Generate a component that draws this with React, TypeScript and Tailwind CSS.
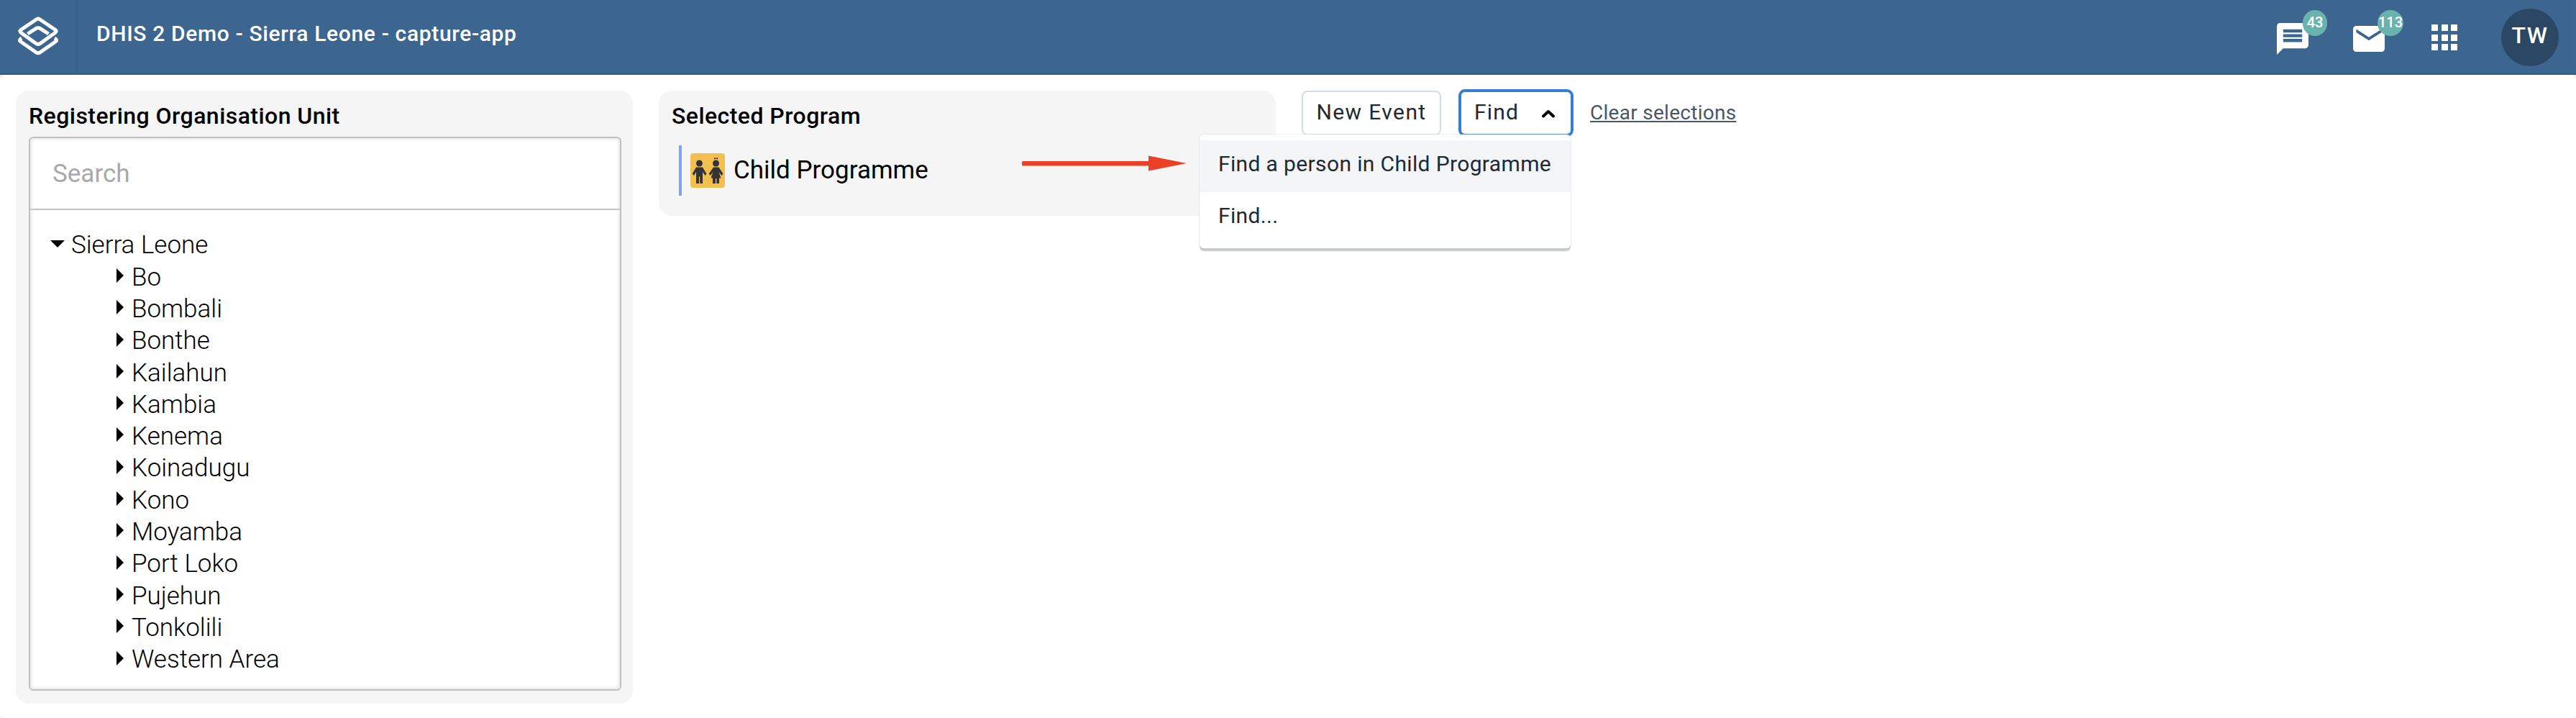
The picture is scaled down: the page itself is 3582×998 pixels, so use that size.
import React from "react";

const districts = [
  "Bo", "Bombali", "Bonthe", "Kailahun", "Kambia", "Kenema", "Koinadugu",
  "Kono", "Moyamba", "Port Loko", "Pujehun", "Tonkolili", "Western Area",
];

function Logo() {
  return (
    <svg width="58" height="56" viewBox="0 0 58 56" fill="none" stroke="#fff" strokeWidth="5" strokeLinejoin="round" className="block">
      <path d="M29 4 Q30 4 31.5 5 L53 19.5 Q55.500 21.300 53 23.200 L31.5 38.700 Q29 40.300 26.5 38.700 L5 23.200 Q2.500 21.300 5 19.5 L26.5 5 Q28 4 29 4 Z" />
      <path d="M14.5 25 L26.5 17.3 Q29 16 31.5 17.3 L43.5 25" />
      <path d="M6 31 Q1.5 33.5 5 36 L26.5 51 Q29 52.5 31.5 51 L53 36 Q56.5 33.5 52 31" />
    </svg>
  );
}

function Header() {
  return (
    <header className="flex h-[104px] items-center bg-[#3c6690] text-white shadow-[inset_0_-2px_1px_#345a80]">
      <div className="flex h-full w-[108px] shrink-0 items-center border-r-2 border-[#36608a] pl-6 pb-1">
        <Logo />
      </div>
      <div className="pb-2.5 pl-[26px] text-[30px] leading-10 font-medium tracking-[0.65px]">DHIS 2 Demo - Sierra Leone - capture-app</div>
      <div className="ml-auto flex h-full items-start pr-6">
        <div className="relative mt-8 mr-[62px] h-11 w-11">
          <svg viewBox="2 2 20 20" className="block h-11 w-11" fill="#fff">
            <path d="M20 2H4c-1.1 0-1.99.9-1.99 2L2 22l4-4h14c1.1 0 2-.9 2-2V4c0-1.1-.9-2-2-2zm-2 12H6v-2h12v2zm0-3H6V9h12v2zm0-3H6V6h12v2z" />
          </svg>
          <span className="absolute -top-[18px] left-9 flex h-9 w-[34px] items-center justify-center rounded-[18px] bg-[#69b3ac] pb-0.5 text-[20px] font-medium">43</span>
        </div>
        <div className="relative mt-9 mr-[65px] h-9 w-11">
          <svg viewBox="2 4 20 16" preserveAspectRatio="none" className="block h-9 w-11" fill="#fff">
            <path d="M20 4H4c-1.1 0-1.99.9-1.99 2L2 18c0 1.1.9 2 2 2h16c1.1 0 2-.9 2-2V6c0-1.1-.9-2-2-2zm0 4l-8 5-8-5V6l8 5 8-5v2z" />
          </svg>
          <span className="absolute -top-[22px] left-[34px] flex h-9 w-9 items-center justify-center rounded-full bg-[#69b3ac] pb-0.5 text-[20px] font-medium">113</span>
        </div>
        <div className="mt-[34px] mr-[61px] grid grid-cols-3 gap-[4.5px]">
          {Array.from({ length: 9 }, (_, i) => <span key={i} className="h-[9px] w-[9px] bg-white" />)}
        </div>
        <div className="mt-3 flex h-20 w-20 items-center justify-center rounded-full bg-[#2a4863] pb-1.5 text-[32px] font-medium tracking-[1.5px]">TW</div>
      </div>
    </header>
  );
}

function OrgUnitPanel() {
  return (
    <section className="h-[852px] w-[858px] shrink-0 rounded-[18px] bg-[#f5f5f5] px-[18px] pt-4 pr-4">
      <h2 className="h-12 text-[32px] leading-[38px] font-medium tracking-[0.45px]">Registering Organisation Unit</h2>
      <div className="h-[770px] rounded-md border-2 border-[#c0c0c0] bg-white shadow-[inset_0_0_6px_#d8d8d8]">
        <div className="flex h-[100px] items-center border-b-2 border-[#c4c4c4] pt-[3px] pl-[31px] text-[35px] text-[#a9a9a9]">Search</div>
        <ul className="pt-[27.5px] pl-7 text-[35px] font-light">
          <li className="flex h-[44.3px] items-center">
            <svg width="20" height="10" className="mb-1.5 mr-[9px]"><path d="M0 0H20L10 10Z" /></svg>
            Sierra Leone
          </li>
          {districts.map((name) => (
            <li key={name} className="flex h-[44.3px] items-center pl-[92px]">
              <svg width="10" height="20" className="mb-1.5 mr-[11px]"><path d="M0 0V20L10 10Z" /></svg>
              {name}
            </li>
          ))}
        </ul>
      </div>
    </section>
  );
}

function ChildrenIcon() {
  return (
    <svg width="48" height="48" viewBox="0 0 48 48" fill="#333" className="block">
      <rect width="48" height="48" rx="4" fill="#f3c04f" />
      <circle cx="12.5" cy="14" r="4.5" />
      <path d="M8 19.5H17L22.5 28.5 20.5 31 17 26V42H13.2V32.5H12V42H8V26L5 31 2.7 28.5Z" />
      <circle cx="35.5" cy="14" r="4.5" />
      <path d="M33 6 35.5 7 38 6V8.5L35.5 7.5 33 8.5Z" />
      <path d="M32 19.5H39.5L45.5 28.5 43.5 31 39.5 26 42.5 34.5H40V42H36.3V35H35V42H31V34.5H28.5L31.5 26 28 31 25.7 28.5Z" />
    </svg>
  );
}

function ProgramPanel() {
  return (
    <section className="ml-9 flex h-[174px] w-[858px] shrink-0 flex-col rounded-[18px] bg-[#f5f5f5] pt-4 pl-[18px]">
      <h2 className="text-[32px] leading-[38px] font-medium tracking-[0.45px]">Selected Program</h2>
      <div className="mt-[22px] ml-[10px] flex h-[70px] items-center border-l-4 border-[#7ea4f0] pl-3">
        <ChildrenIcon />
        <span className="ml-3 text-[35px]">Child Programme</span>
        <svg width="230" height="22" viewBox="0 0 230 22" className="mb-[21px] ml-auto mr-[123px]" fill="#eb4025">
          <rect y="8" width="180" height="6.5" rx="1.5" />
          <path d="M176 .5 229 11 176 21.5Z" />
        </svg>
      </div>
    </section>
  );
}

function Actions() {
  return (
    <div className="flex items-start text-[30px] text-[#212934]">
      <button className="ml-9 flex h-[62px] w-[194px] items-center justify-center rounded-lg border-2 border-[#d5dde5] bg-white pb-1 tracking-[1.4px]">New Event</button>
      <div className="relative -mt-0.5 ml-6">
        <button className="flex h-[66px] w-40 items-center rounded-[9px] border-4 border-[#347fd6] bg-white pb-1 pl-[18px] tracking-[1.2px]">
          Find
          <svg width="18" height="12" viewBox="0 0 18 12" className="ml-8 mt-1.5" fill="none" stroke="#000" strokeWidth="4" strokeLinecap="round" strokeLinejoin="round"><path d="M2 9.5 9 3 16 9.5" /></svg>
        </button>
        <div className="absolute top-[63px] right-1 h-[158px] w-[516px] rounded-md bg-white pt-2 tracking-[0.36px] shadow-[0_4px_1px_#c6cacf,0_0_2px_#c9ccd1]">
          <div className="flex h-[72px] items-center bg-[#f3f5f7] pb-[7px] pl-[26px]">Find a person in Child Programme</div>
          <div className="flex h-[72px] items-center pb-[7px] pl-[26px]">Find...</div>
        </div>
      </div>
      <a className="ml-[23px] pt-[13px] text-[28px] leading-[36px] tracking-[0.28px] text-[#4a5768] underline decoration-2 underline-offset-2">Clear selections</a>
    </div>
  );
}

export default function App() {
  return (
    <div className="h-[998px] w-[3582px] overflow-hidden bg-[#ececec] font-[Roboto,sans-serif] text-black">
      <Header />
      <main className="flex h-[894px] items-start rounded-t-lg rounded-b bg-white pt-[22px] pl-[22px]">
        <OrgUnitPanel />
        <ProgramPanel />
        <Actions />
      </main>
    </div>
  );
}
